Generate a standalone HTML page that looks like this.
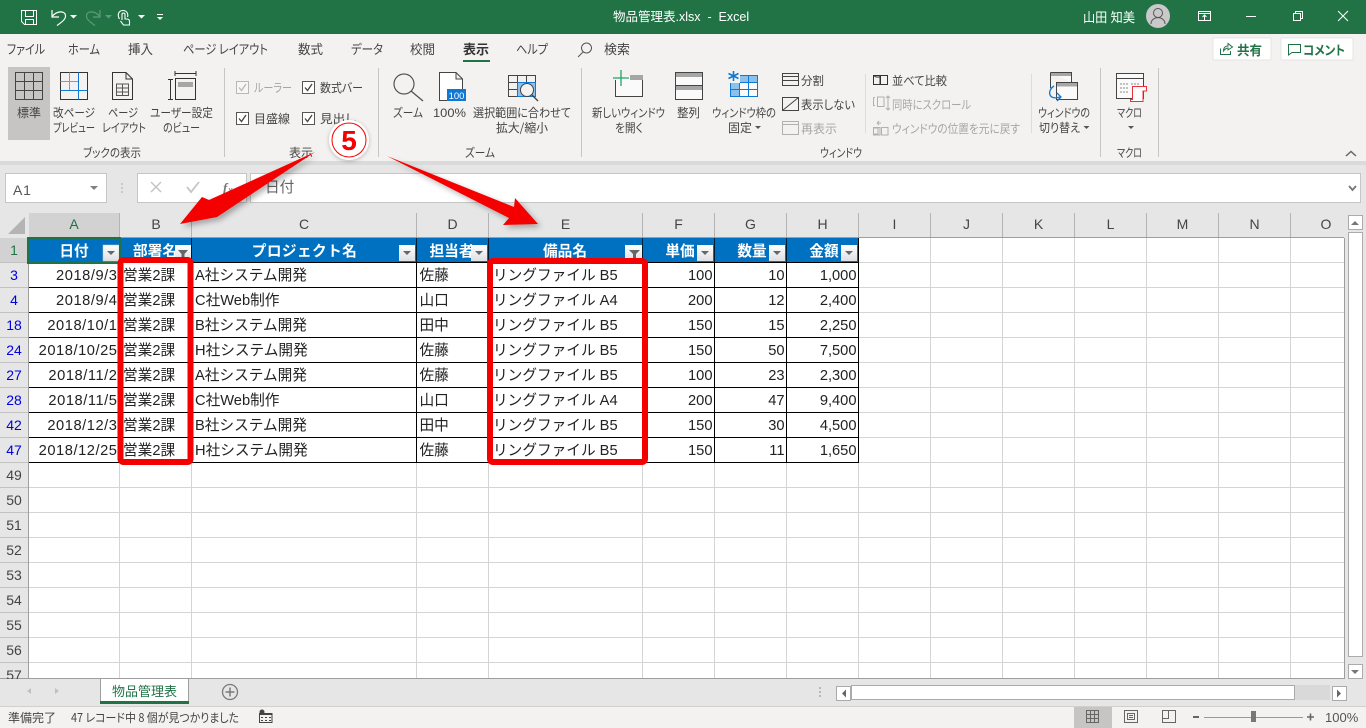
<!DOCTYPE html>
<html lang="ja">
<head>
<meta charset="utf-8">
<title>物品管理表.xlsx - Excel</title>
<style>
html,body{margin:0;padding:0;width:1366px;height:728px;overflow:hidden;background:#e6e6e6}
svg{display:block;position:absolute;left:0;top:0}
text{font-family:"Liberation Sans","Noto Sans CJK JP",sans-serif;white-space:pre}
.r text,.r{font-family:"Noto Sans CJK JP","Liberation Sans",sans-serif;font-size:12px;fill:#444;font-feature-settings:"palt"}
.tab{font-family:"Noto Sans CJK JP",sans-serif;font-size:13px;fill:#444;font-feature-settings:"palt"}
.ch{font-size:14px;fill:#444;text-anchor:middle}
.rh{font-size:14px;text-anchor:middle;fill:#444}
.c{font-size:14.67px;fill:#222}
.n{font-size:14.67px;fill:#222;text-anchor:end}
.d{font-size:14.67px;fill:#222;text-anchor:end;letter-spacing:.55px}
.h{font-size:14.67px;font-weight:700;fill:#fff;text-anchor:middle}
</style>
</head>
<body>
<svg width="1366" height="728" viewBox="0 0 1366 728" xmlns="http://www.w3.org/2000/svg">
<defs>
<linearGradient id="fb" x1="0" y1="0" x2="0" y2="1"><stop offset="0" stop-color="#fff"/><stop offset="1" stop-color="#dcdfe4"/></linearGradient>
<filter id="sh" x="-20%" y="-20%" width="140%" height="140%"><feDropShadow dx="3" dy="3" stdDeviation="3" flood-color="#000" flood-opacity=".3"/></filter>
<filter id="gl" x="-30%" y="-30%" width="160%" height="160%"><feDropShadow dx="0" dy="1" stdDeviation="2" flood-color="#000" flood-opacity=".25"/></filter>
</defs>

<!-- title bar -->
<rect width="1366" height="34" fill="#217346"/>
<g fill="none" stroke="#fff">
<path d="M21.500 10.500H36.500V24.500H24.500L21.500 21.500Z"/><path d="M25.500 10.500V16.500H33.500V10.500M25.500 24.500V19.500H33.500V24.500"/>
<path d="M52 10V17H59M52 16.500C57 10.500 65 10.500 65.500 15.500C66 19 62 22 57 25.500" stroke-width="1.200"/>
<path d="M100 10V17H93M100 16.500C95 10.500 87 10.500 86.500 15.500C86 19 90 22 95 25.500" stroke="#5d9b7d" stroke-width="1.200"/>
<path d="M119.500 19C117 15 118.500 10.500 123 10.500C127 10.500 128.500 14 127.500 17M122 20V14.500C122 12.500 125 12.500 125 14.500V19H127C129 19 129.500 20 129.500 21.500V25H123.500L120.500 21" stroke-width="1.100"/>
</g>
<g fill="#fff"><path d="M70 15h7l-3.500 3.500zM138 15h7l-3.500 3.500zM157 17h6l-3 3zM157 14h6v1h-6z"/></g>
<path d="M105 15h7l-3.500 3.500z" fill="#5d9b7d"/>
<text x="613" y="21" font-size="12.500" fill="#fff">物品管理表.xlsx  -  Excel</text>
<text x="1083" y="22" font-size="13" fill="#fff" textLength="52" lengthAdjust="spacingAndGlyphs">山田 知美</text>
<circle cx="1158" cy="16" r="12" fill="#c9c9c9"/>
<circle cx="1158" cy="13" r="4.500" fill="none" stroke="#555"/><path d="M1151 24C1151 15.500 1165 15.500 1165 24" fill="none" stroke="#555"/>
<g fill="none" stroke="#fff"><path d="M1198.500 11.500H1210.500V20.500H1198.500ZM1198.500 13.500H1210.500M1204.500 20V15.500M1202.500 17L1204.500 15L1206.500 17"/>
<path d="M1246 16.500H1256"/><path d="M1293.500 13.500H1300.500V20.500H1293.500ZM1295.500 13.500V11.500H1302.500V18.500H1300.500"/><path d="M1338 11L1348 21M1348 11L1338 21"/></g>

<!-- ribbon -->
<rect y="34" width="1366" height="127" fill="#f3f2f1"/>
<rect y="161" width="1366" height="4" fill="#dadada"/>
<text class="tab" x="7" y="54" textLength="38" lengthAdjust="spacingAndGlyphs">ファイル</text>
<text class="tab" x="68" y="54" textLength="32" lengthAdjust="spacingAndGlyphs">ホーム</text>
<text class="tab" x="128" y="54" textLength="25" lengthAdjust="spacingAndGlyphs">挿入</text>
<text class="tab" x="183" y="54" textLength="85" lengthAdjust="spacingAndGlyphs">ページ レイアウト</text>
<text class="tab" x="298" y="54" textLength="25" lengthAdjust="spacingAndGlyphs">数式</text>
<text class="tab" x="351" y="54" textLength="32" lengthAdjust="spacingAndGlyphs">データ</text>
<text class="tab" x="410" y="54" textLength="25" lengthAdjust="spacingAndGlyphs">校閲</text>
<text class="tab" x="463" y="54" textLength="26" lengthAdjust="spacingAndGlyphs" style="font-weight:700;fill:#333">表示</text>
<text class="tab" x="516" y="54" textLength="32" lengthAdjust="spacingAndGlyphs">ヘルプ</text>
<text class="tab" x="604" y="54" textLength="26" lengthAdjust="spacingAndGlyphs">検索</text>
<rect x="463" y="60" width="27" height="2" fill="#217346"/>
<circle cx="586.500" cy="48" r="5" fill="none" stroke="#555"/><path d="M583 52L578 57" stroke="#555" fill="none"/>
<!-- share / comment -->
<rect x="1213" y="38" width="58" height="22" rx="1" fill="#fff" stroke="#e4e4e4"/>
<rect x="1281" y="38" width="72" height="22" rx="1" fill="#fff" stroke="#e4e4e4"/>
<path d="M1220.500 48.500V54.500H1230.500V51M1223.500 51C1223.500 47 1226 46 1228 46V43.500L1232.500 47L1228 50V48C1226.500 48 1225 49 1223.500 51Z" fill="none" stroke="#217346"/>
<path d="M1288.500 44.500H1300.500V52.500H1292L1288.500 55Z" fill="none" stroke="#217346"/>
<text x="1237" y="55" class="tab" textLength="25" lengthAdjust="spacingAndGlyphs" style="font-weight:700;fill:#217346">共有</text>
<text x="1303" y="55" class="tab" textLength="42" lengthAdjust="spacingAndGlyphs" style="font-weight:700;fill:#217346">コメント</text>

<!-- separators -->
<path d="M224.500 68V157M378.500 68V157M581.500 68V157M1100.500 68V157M1158.500 68V157" stroke="#c6c6c6"/>
<path d="M865.500 74V133M1031.500 74V133" stroke="#dcdcdc"/>

<!-- view group -->
<rect x="8" y="67" width="42" height="73" fill="#c6c5c3"/>
<g fill="none" stroke="#333">
<path d="M15.500 72.500H42.500V99.500H15.500ZM24.500 72.500V99.500M33.500 72.500V99.500M15.500 81.500H42.500M15.500 90.500H42.500" stroke="#444"/>
<path d="M60.500 72.500H87.500V99.500H60.500Z"/><path d="M69.500 72.500V90M60.500 81.500H78" stroke="#999"/>
<path d="M78.500 72.500V99.500M60.500 90.500H87.500" stroke="#0f78d4"/>
<path d="M112.500 72.500H126L132.500 79V99.500H112.500ZM126 72.500V79H132.500"/>
<path d="M116.500 84H128.500V95.500H116.500ZM116.500 88H128.500M116.500 92H128.500M122.500 84V95.500" stroke="#555"/>
<path d="M175 73.500H196M175 71V76M196 71V76M168 79.500H173M168 99.500H173M170.500 79.500V99.500"/>
<path d="M175.500 78.500H195.500V99.500H175.500Z"/>
</g>
<rect x="178" y="82" width="15" height="5" fill="#a6a6a6"/>
<g class="r">
<text x="17" y="117" textLength="24" lengthAdjust="spacingAndGlyphs">標準</text>
<text x="53" y="117" textLength="42" lengthAdjust="spacingAndGlyphs">改ページ</text><text x="53" y="132" textLength="42" lengthAdjust="spacingAndGlyphs">プレビュー</text>
<text x="108" y="117" textLength="30" lengthAdjust="spacingAndGlyphs">ページ</text><text x="102" y="132" textLength="44" lengthAdjust="spacingAndGlyphs">レイアウト</text>
<text x="150" y="117" textLength="63" lengthAdjust="spacingAndGlyphs">ユーザー設定</text><text x="163" y="132" textLength="37" lengthAdjust="spacingAndGlyphs">のビュー</text>
<text x="83" y="157" textLength="58" lengthAdjust="spacingAndGlyphs">ブックの表示</text>
<text x="289" y="157" textLength="24" lengthAdjust="spacingAndGlyphs">表示</text>
<text x="465" y="157" textLength="30" lengthAdjust="spacingAndGlyphs">ズーム</text>
<text x="820" y="157" textLength="42" lengthAdjust="spacingAndGlyphs">ウィンドウ</text>
<text x="1117" y="157" textLength="25" lengthAdjust="spacingAndGlyphs">マクロ</text>
</g>
<!-- checkboxes -->
<g fill="none">
<rect x="236.500" y="81.500" width="12" height="12" fill="#f6f6f6" stroke="#b8b8b8"/><path d="M239 87.500L241.500 90.500L246 84" stroke="#b8b8b8" stroke-width="1.300"/>
<rect x="302.500" y="81.500" width="12" height="12" fill="#fff" stroke="#555"/><path d="M305 87.500L307.500 90.500L312 84" stroke="#444" stroke-width="1.300"/>
<rect x="236.500" y="112.500" width="12" height="12" fill="#fff" stroke="#555"/><path d="M239 118.500L241.500 121.500L246 115" stroke="#444" stroke-width="1.300"/>
<rect x="302.500" y="112.500" width="12" height="12" fill="#fff" stroke="#555"/><path d="M305 118.500L307.500 121.500L312 115" stroke="#444" stroke-width="1.300"/>
</g>
<g class="r">
<text x="254" y="92" textLength="38" lengthAdjust="spacingAndGlyphs" style="fill:#a6a6a6">ルーラー</text><text x="320" y="92" textLength="43" lengthAdjust="spacingAndGlyphs">数式バー</text>
<text x="254" y="123" textLength="36" lengthAdjust="spacingAndGlyphs">目盛線</text><text x="320" y="123" textLength="36" lengthAdjust="spacingAndGlyphs">見出し</text>
</g>
<!-- zoom group -->
<circle cx="404" cy="84" r="10" fill="none" stroke="#555" stroke-width="1.200"/><path d="M411 91L423 101" stroke="#555" stroke-width="1.400"/>
<path d="M439.500 72.500H456L462.500 79V100.500H439.500ZM456 72.500V79H462.500" fill="#fff" stroke="#444"/>
<rect x="447" y="89" width="19" height="12" fill="#0f78d4"/>
<text x="456.500" y="99" font-size="9.500" fill="#fff" text-anchor="middle">100</text>
<g class="r"><text x="393" y="117" textLength="30" lengthAdjust="spacingAndGlyphs">ズーム</text><text x="433" y="117" textLength="33" lengthAdjust="spacingAndGlyphs" style="font-family:'Liberation Sans'">100%</text>
<text x="473" y="117" textLength="98" lengthAdjust="spacingAndGlyphs">選択範囲に合わせて</text><text x="496" y="132" textLength="52" lengthAdjust="spacingAndGlyphs">拡大/縮小</text></g>
<rect x="518" y="82" width="18" height="15" fill="#8dc0ea"/>
<path d="M508.500 75.500H535.500V96.500H508.500ZM517.500 75.500V96.500M526.500 75.500V82M508.500 82.500H535.500M508.500 89.500H518" fill="none" stroke="#444"/>
<path d="M517.500 82.500H535.500V96.500H517.500Z" fill="none" stroke="#0f78d4"/>
<circle cx="527" cy="90" r="6.500" fill="#f3f2f1" stroke="#444"/><path d="M532 95L538 101" stroke="#444" stroke-width="1.300"/>
<!-- window group -->
<path d="M615.500 80V96.500H642.500V75.500H630" fill="#fafafa" stroke="#444"/>
<rect x="630" y="75" width="13" height="5" fill="#a6a6a6"/>
<path d="M613 78H629M621 70V86" stroke="#21a366" stroke-width="1.300"/>
<path d="M675.500 72.500H702.500V99.500H675.500ZM675.500 85.500H702.500" fill="#fafafa" stroke="#444"/>
<rect x="676" y="73" width="26" height="4" fill="#a6a6a6"/><rect x="676" y="86" width="26" height="4" fill="#a6a6a6"/>
<rect x="730" y="75" width="28" height="22" fill="#fafafa"/><rect x="730" y="75" width="28" height="7" fill="#8dc0ea"/><rect x="730" y="75" width="9" height="22" fill="#8dc0ea"/>
<path d="M730.500 75.500H757.500V96.500H730.500ZM739.500 75.500V96.500M748.500 75.500V96.500M730.500 82.500H757.500M730.500 89.500H757.500" fill="none" stroke="#0f78d4"/>
<rect x="727" y="70" width="13" height="13" fill="#f3f2f1"/>
<path d="M733.500 71V81M728.500 73.500L738.500 78.500M728.500 78.500L738.500 73.500" stroke="#0f78d4" stroke-width="1.600"/>
<g class="r"><text x="592" y="117" textLength="73" lengthAdjust="spacingAndGlyphs">新しいウィンドウ</text><text x="615" y="132" textLength="28" lengthAdjust="spacingAndGlyphs">を開く</text>
<text x="677" y="117" textLength="23" lengthAdjust="spacingAndGlyphs">整列</text>
<text x="712" y="117" textLength="64" lengthAdjust="spacingAndGlyphs">ウィンドウ枠の</text><text x="728" y="132" textLength="24" lengthAdjust="spacingAndGlyphs">固定</text></g>
<path d="M755 126h6l-3 3z" fill="#555"/>
<g fill="none" stroke="#444"><path d="M782.500 73.500H798.500V85.500H782.500ZM782.500 76.500H798.500M782.500 80.500H798.500"/>
<path d="M782.500 97.500H798.500V110.500H782.500ZM782.500 110.500L798.500 97.500"/>
<path d="M782.500 121.500H798.500V134.500H782.500ZM782.500 124.500H798.500" stroke="#b0b0b0"/></g>
<g class="r"><text x="801" y="85" textLength="23" lengthAdjust="spacingAndGlyphs">分割</text><text x="801" y="109" textLength="54" lengthAdjust="spacingAndGlyphs">表示しない</text><text x="801" y="133" textLength="36" lengthAdjust="spacingAndGlyphs" style="fill:#a6a6a6">再表示</text>
<text x="892" y="85" textLength="55" lengthAdjust="spacingAndGlyphs">並べて比較</text><text x="892" y="109" textLength="79" lengthAdjust="spacingAndGlyphs" style="fill:#a6a6a6">同時にスクロール</text><text x="892" y="133" textLength="128" lengthAdjust="spacingAndGlyphs" style="fill:#a6a6a6">ウィンドウの位置を元に戻す</text></g>
<g fill="none" stroke="#333"><path d="M873.500 75.500H880V84.500H873.500ZM873.500 75.500L876 77H880M880.500 75.500H887.500V84.500H880.500Z"/></g>
<g fill="none" stroke="#b0b0b0"><path d="M873.500 97.500H875M873.500 97.500V105.500H875M877.500 97H884V106.500H877.500ZM888 96V110M886 98L888 96L890 98M886 108L888 110L890 108"/>
<path d="M874 128H878V134H874M873.500 127.500H880V135H873.500ZM881.500 127.500H888V135H881.500ZM877 123H881M877 123L879 121M877 123L879 125"/></g>
<!-- switch windows -->
<g stroke="#444"><path d="M1050.500 72.500H1071.500V82M1050.500 72.500V88" fill="#fafafa"/><rect x="1051" y="73" width="20" height="3" fill="#a6a6a6" stroke="none"/>
<rect x="1056.500" y="82.500" width="21" height="17" fill="#fafafa"/><rect x="1057" y="83" width="20" height="3.500" fill="#a6a6a6" stroke="none"/></g>
<path d="M1054 86C1047 90 1048 101 1060 97" fill="none" stroke="#0f78d4" stroke-width="1.300"/><path d="M1057 93L1061 97L1057 101" fill="none" stroke="#0f78d4" stroke-width="1.300"/>
<g class="r"><text x="1038" y="117" textLength="52" lengthAdjust="spacingAndGlyphs">ウィンドウの</text><text x="1039" y="132" textLength="41" lengthAdjust="spacingAndGlyphs">切り替え</text>
<text x="1117" y="117" textLength="25" lengthAdjust="spacingAndGlyphs">マクロ</text></g>
<path d="M1083.500 126h6l-3 3zM1128 126h6l-3 3z" fill="#555"/>
<!-- macro -->
<path d="M1116.500 73.500H1143.500V98.500H1116.500ZM1116.500 78.500H1143.500" fill="#fafafa" stroke="#444"/>
<path d="M1120 84H1128M1120 88H1128M1120 92H1128M1131 84H1140" stroke="#888" stroke-dasharray="2 1" fill="none"/>
<path d="M1132.500 86.500H1146.500V91H1143V101.500H1130.500V99.500H1132.500Z" fill="#fff" stroke="#e8333a"/>
<path d="M1346 156L1351 151.500L1356 156" fill="none" stroke="#666" stroke-width="1.500"/>

<!-- formula bar -->
<rect x="5.500" y="173.500" width="101" height="29" fill="#fff" stroke="#c6c6c6"/>
<text x="13" y="195" font-size="14" fill="#555" letter-spacing=".8">A1</text>
<path d="M90 186h8l-4 4z" fill="#808080"/>
<path d="M122 183v2M122 187v2M122 191v2" stroke="#aaa"/>
<rect x="137.500" y="173.500" width="109" height="29" fill="#fff" stroke="#c6c6c6"/>
<path d="M151 182L161 192M161 182L151 192" stroke="#c4c4c4" stroke-width="1.500" fill="none"/>
<path d="M187 187L191 192L199 182" stroke="#c4c4c4" stroke-width="1.800" fill="none"/>
<text x="223" y="192" font-size="13" font-style="italic" font-weight="700" fill="#777" style="font-family:'Liberation Serif',serif">f</text><text x="228" y="193" font-size="9" font-style="italic" fill="#777">x</text>
<rect x="250.500" y="173.500" width="1110" height="29" fill="#fff" stroke="#c6c6c6"/>
<text x="265" y="192" font-size="14.670" fill="#666">日付</text>
<path d="M1349 186L1352.500 190L1356 186" stroke="#777" stroke-width="1.800" fill="none"/>

<!-- column header -->
<rect x="0" y="212" width="1344" height="26" fill="#e6e6e6"/>
<rect x="29" y="213" width="90" height="24" fill="#d2d2d2"/>
<path d="M25 217V234H8Z" fill="#b4b4b4"/>
<path d="M119.500 213V237M191.500 213V237M416.500 213V237M488.500 213V237M642.500 213V237M714.500 213V237M786.500 213V237M858.500 213V237M930.500 213V237M1002.500 213V237M1074.500 213V237M1146.500 213V237M1218.500 213V237M1290.500 213V237" stroke="#b4b4b4"/>
<path d="M28.500 237.500H1344" stroke="#9e9e9e"/>
<text class="ch" x="74" y="229" style="fill:#217346">A</text><text class="ch" x="156" y="229">B</text><text class="ch" x="304" y="229">C</text><text class="ch" x="452.500" y="229">D</text><text class="ch" x="565.500" y="229">E</text><text class="ch" x="678.500" y="229">F</text><text class="ch" x="750.500" y="229">G</text><text class="ch" x="822.500" y="229">H</text><text class="ch" x="894.500" y="229">I</text><text class="ch" x="966.500" y="229">J</text><text class="ch" x="1038.500" y="229">K</text><text class="ch" x="1110.500" y="229">L</text><text class="ch" x="1182.500" y="229">M</text><text class="ch" x="1254.500" y="229">N</text><text class="ch" x="1326" y="229">O</text>

<!-- grid -->
<rect x="29" y="238" width="1315" height="440" fill="#fff"/>
<path d="M119.500 238V678M191.500 238V678M416.500 238V678M488.500 238V678M642.500 238V678M714.500 238V678M786.500 238V678M858.500 238V678M930.500 238V678M1002.500 238V678M1074.500 238V678M1146.500 238V678M1218.500 238V678M1290.500 238V678M29 262.500H1344M29 287.500H1344M29 312.500H1344M29 337.500H1344M29 362.500H1344M29 387.500H1344M29 412.500H1344M29 437.500H1344M29 462.500H1344M29 487.500H1344M29 512.500H1344M29 537.500H1344M29 562.500H1344M29 587.500H1344M29 612.500H1344M29 637.500H1344M29 662.500H1344" stroke="#d4d4d4"/>
<path d="M1344.500 238V678.500H0" stroke="#9e9e9e" fill="none"/>

<!-- row headers -->
<rect x="0" y="238" width="28" height="440" fill="#e6e6e6"/>
<rect x="0" y="238" width="28" height="24" fill="#d2d2d2"/>
<path d="M0 262.500H28M0 287.500H28M0 312.500H28M0 337.500H28M0 362.500H28M0 387.500H28M0 412.500H28M0 437.500H28M0 462.500H28M0 487.500H28M0 512.500H28M0 537.500H28M0 562.500H28M0 587.500H28M0 612.500H28M0 637.500H28M0 662.500H28" stroke="#c2c2c2"/>
<path d="M28.500 238V678" stroke="#9e9e9e"/>
<text class="rh" x="14" y="255" style="fill:#217346">1</text>
<text class="rh" x="14" y="280" style="fill:#0000e0">3</text><text class="rh" x="14" y="305" style="fill:#0000e0">4</text><text class="rh" x="14" y="330" style="fill:#0000e0">18</text><text class="rh" x="14" y="355" style="fill:#0000e0">24</text><text class="rh" x="14" y="380" style="fill:#0000e0">27</text><text class="rh" x="14" y="405" style="fill:#0000e0">28</text><text class="rh" x="14" y="430" style="fill:#0000e0">42</text><text class="rh" x="14" y="455" style="fill:#0000e0">47</text>
<text class="rh" x="14" y="480">49</text><text class="rh" x="14" y="505">50</text><text class="rh" x="14" y="530">51</text><text class="rh" x="14" y="555">52</text><text class="rh" x="14" y="580">53</text><text class="rh" x="14" y="605">54</text><text class="rh" x="14" y="630">55</text><text class="rh" x="14" y="655">56</text><text class="rh" x="14" y="680">57</text>
<rect x="0" y="679" width="1366" height="49" fill="#e6e6e6"/>

<!-- table header -->
<rect x="29" y="238" width="830" height="24" fill="#0070c0"/>
<path d="M119.500 262V462.500M191.500 262V462.500M416.500 262V462.500M488.500 262V462.500M642.500 262V462.500M714.500 262V462.500M786.500 262V462.500M858.500 238V462.500M29 262.500H859M29 287.500H859M29 312.500H859M29 337.500H859M29 362.500H859M29 387.500H859M29 412.500H859M29 437.500H859M29 462.500H859" stroke="#000"/>
<path d="M191.500 238V262M416.500 238V262M488.500 238V262M642.500 238V262M714.500 238V262M786.500 238V262M119.500 238V262" stroke="#000" opacity=".75"/>
<text class="h" x="74" y="256">日付</text><text class="h" x="155" y="256">部署名</text><text class="h" x="304.500" y="256" letter-spacing=".4">プロジェクト名</text><text class="h" x="451.500" y="256">担当者</text><text class="h" x="565" y="256">備品名</text><text class="h" x="680" y="256">単価</text><text class="h" x="752" y="256">数量</text><text class="h" x="824" y="256">金額</text>
<rect x="103" y="245" width="16" height="16" fill="url(#fb)" stroke="#c8c8c8" stroke-width=".5"/><path d="M107 251h8l-4 4z" fill="#666"/>
<rect x="175" y="245" width="16" height="16" fill="url(#fb)"/><path d="M178 250H188L184.500 254V260H181.500V254Z" fill="#666"/>
<rect x="399" y="245" width="16" height="16" fill="url(#fb)"/><path d="M403 251h8l-4 4z" fill="#666"/>
<rect x="471" y="245" width="16" height="16" fill="url(#fb)"/><path d="M475 251h8l-4 4z" fill="#666"/>
<rect x="625" y="245" width="17" height="16" fill="url(#fb)"/><path d="M629 250H640L636 254V260H633V254Z" fill="#666"/>
<rect x="697" y="245" width="16" height="16" fill="url(#fb)"/><path d="M701 251h8l-4 4z" fill="#666"/>
<rect x="769" y="245" width="16" height="16" fill="url(#fb)"/><path d="M773 251h8l-4 4z" fill="#666"/>
<rect x="841" y="245" width="16" height="16" fill="url(#fb)"/><path d="M845 251h8l-4 4z" fill="#666"/>
<!-- selected cell -->
<rect x="28" y="238" width="92" height="25" fill="none" stroke="#217346" stroke-width="2"/>

<!-- data -->
<text class="d" x="117.500" y="280">2018/9/3</text><text class="c" x="123" y="280">営業2課</text><text class="c" x="195" y="280">A社システム開発</text><text class="c" x="419.500" y="280">佐藤</text><text class="c" x="493" y="280">リングファイル B5</text><text class="n" x="712.500" y="280">100</text><text class="n" x="784.500" y="280">10</text><text class="n" x="856.500" y="280">1,000</text>
<text class="d" x="117.500" y="305">2018/9/4</text><text class="c" x="123" y="305">営業2課</text><text class="c" x="195" y="305">C社Web制作</text><text class="c" x="419.500" y="305">山口</text><text class="c" x="493" y="305">リングファイル A4</text><text class="n" x="712.500" y="305">200</text><text class="n" x="784.500" y="305">12</text><text class="n" x="856.500" y="305">2,400</text>
<text class="d" x="117.500" y="330">2018/10/1</text><text class="c" x="123" y="330">営業2課</text><text class="c" x="195" y="330">B社システム開発</text><text class="c" x="419.500" y="330">田中</text><text class="c" x="493" y="330">リングファイル B5</text><text class="n" x="712.500" y="330">150</text><text class="n" x="784.500" y="330">15</text><text class="n" x="856.500" y="330">2,250</text>
<text class="d" x="117.500" y="355">2018/10/25</text><text class="c" x="123" y="355">営業2課</text><text class="c" x="195" y="355">H社システム開発</text><text class="c" x="419.500" y="355">佐藤</text><text class="c" x="493" y="355">リングファイル B5</text><text class="n" x="712.500" y="355">150</text><text class="n" x="784.500" y="355">50</text><text class="n" x="856.500" y="355">7,500</text>
<text class="d" x="117.500" y="380">2018/11/2</text><text class="c" x="123" y="380">営業2課</text><text class="c" x="195" y="380">A社システム開発</text><text class="c" x="419.500" y="380">佐藤</text><text class="c" x="493" y="380">リングファイル B5</text><text class="n" x="712.500" y="380">100</text><text class="n" x="784.500" y="380">23</text><text class="n" x="856.500" y="380">2,300</text>
<text class="d" x="117.500" y="405">2018/11/5</text><text class="c" x="123" y="405">営業2課</text><text class="c" x="195" y="405">C社Web制作</text><text class="c" x="419.500" y="405">山口</text><text class="c" x="493" y="405">リングファイル A4</text><text class="n" x="712.500" y="405">200</text><text class="n" x="784.500" y="405">47</text><text class="n" x="856.500" y="405">9,400</text>
<text class="d" x="117.500" y="430">2018/12/3</text><text class="c" x="123" y="430">営業2課</text><text class="c" x="195" y="430">B社システム開発</text><text class="c" x="419.500" y="430">田中</text><text class="c" x="493" y="430">リングファイル B5</text><text class="n" x="712.500" y="430">150</text><text class="n" x="784.500" y="430">30</text><text class="n" x="856.500" y="430">4,500</text>
<text class="d" x="117.500" y="455">2018/12/25</text><text class="c" x="123" y="455">営業2課</text><text class="c" x="195" y="455">H社システム開発</text><text class="c" x="419.500" y="455">佐藤</text><text class="c" x="493" y="455">リングファイル B5</text><text class="n" x="712.500" y="455">150</text><text class="n" x="784.500" y="455">11</text><text class="n" x="856.500" y="455">1,650</text>

<!-- vertical scrollbar -->
<rect x="1345" y="212" width="21" height="467" fill="#e6e6e6"/>
<rect x="1348.500" y="232.500" width="14" height="424" fill="#fff" stroke="#ababab"/>
<rect x="1348.500" y="215.500" width="14" height="14" fill="#fff" stroke="#ababab"/><path d="M1351 225h8l-4-4z" fill="#777"/>
<rect x="1348.500" y="664.500" width="14" height="14" fill="#fff" stroke="#ababab"/><path d="M1351 670h8l-4 4z" fill="#777"/>

<!-- sheet tabs -->
<path d="M100.500 678.500V703M188.500 678.500V703" stroke="#9e9e9e"/>
<rect x="101" y="679" width="87" height="22" fill="#fff"/>
<rect x="100" y="701" width="89" height="3" fill="#217346"/>
<text x="144.500" y="696" font-size="13" fill="#217346" text-anchor="middle">物品管理表</text>
<path d="M31 688V694L27 691ZM55 688V694L59 691Z" fill="#c0c0c0"/>
<circle cx="230" cy="692" r="7.500" fill="none" stroke="#7a7a7a" stroke-width="1.300"/><path d="M225.500 692H234.500M230 687.500V696.500" stroke="#7a7a7a" stroke-width="1.500"/>
<path d="M820 687v2M820 691v2M820 695v2" stroke="#888"/>
<rect x="836.500" y="686.500" width="14" height="14" fill="#fff" stroke="#ababab"/><path d="M846 689.500v8l-4-4z" fill="#666"/>
<rect x="851" y="685" width="479" height="15" fill="#d9d9d9"/>
<rect x="851.500" y="685.500" width="443" height="14" fill="#fff" stroke="#ababab"/>
<rect x="1332.500" y="686.500" width="14" height="14" fill="#fff" stroke="#ababab"/><path d="M1337 689.500v8l4-4z" fill="#666"/>

<!-- status bar -->
<rect y="706" width="1366" height="22" fill="#f3f2f1"/>
<rect y="706" width="1366" height="1" fill="#cfcfcf"/>
<g class="r"><text x="8" y="722" textLength="48" lengthAdjust="spacingAndGlyphs">準備完了</text><text x="71" y="722" textLength="168" lengthAdjust="spacingAndGlyphs">47 レコード中 8 個が見つかりました</text></g>
<path d="M259.500 713.500H272V722.500H259.500Z" fill="none" stroke="#444"/><circle cx="262" cy="712" r="2.500" fill="#444"/><path d="M260 713H272V715H260ZM261 717h2v1h-2zM265 717h2v1h-2zM269 717h2v1h-2zM261 720h2v1h-2zM265 720h2v1h-2zM269 720h2v1h-2z" fill="#444"/>
<rect x="1074" y="707" width="38" height="21" fill="#c6c5c3"/>
<path d="M1086.500 710.500H1098.500V722.500H1086.500ZM1090.500 710.500V722.500M1094.500 710.500V722.500M1086.500 714.500H1098.500M1086.500 718.500H1098.500" fill="none" stroke="#666"/>
<path d="M1124.500 710.500H1137.500V722.500H1124.500ZM1127.500 713.500H1134.500V719.500H1127.500ZM1129 715.500H1133M1129 717.500H1133" fill="none" stroke="#666"/>
<path d="M1162.500 710.500H1175.500V722.500H1162.500ZM1162.500 718.500H1168.500V710.500" fill="none" stroke="#666"/>
<path d="M1193 717H1199" stroke="#666" stroke-width="2"/>
<path d="M1204 717.500H1303" stroke="#999"/>
<rect x="1251" y="711" width="5" height="11" fill="#777"/>
<path d="M1307 717H1314M1310.500 713.500V720.500" stroke="#666" stroke-width="1.600"/>
<text x="1325" y="722" font-size="13" fill="#555">100%</text>

<!-- annotations -->
<g fill="none" stroke="#f40000" stroke-width="6">
<rect x="120.500" y="260" width="70" height="202" rx="3"/>
<rect x="490" y="261" width="155" height="201" rx="3"/>
</g>
<g fill="#f40000" filter="url(#sh)">
<path d="M315 152L209 200L202 197L180 224L217 217Z"/>
<path d="M387 156L514 207L515 198L538 224L503 225L509 218Z"/>
</g>
<circle cx="349" cy="140" r="20" fill="#fff" filter="url(#gl)"/>
<circle cx="349" cy="140" r="17" fill="none" stroke="#f40000" stroke-width="1"/>
<text x="349" y="150" font-size="28" font-weight="700" fill="#f40000" text-anchor="middle">5</text>
</svg>
</body>
</html>
